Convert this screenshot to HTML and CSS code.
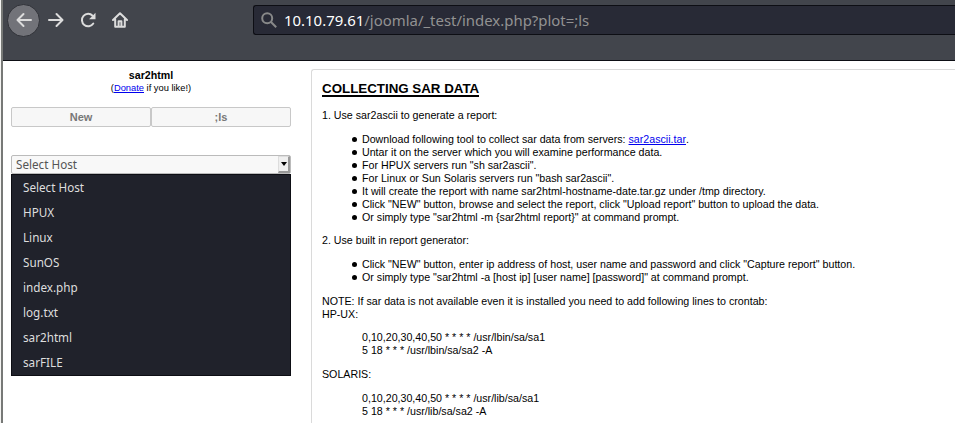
FILE: index.html
```html
<!DOCTYPE html>
<html lang="en">
<head>
<meta charset="utf-8">
<title>sar2html</title>
<link rel="stylesheet" href="styles.css">
</head>
<body>
<div class="window">
  <header class="toolbar">
    <nav class="nav">
      <span class="nav-item back"><svg viewBox="0 0 16 16"><path d="M15 8H2M7.5 2 1.5 8l6 6"/></svg></span>
      <span class="nav-item"><svg viewBox="0 0 16 16"><path d="M1 8h13M8.500 2l6 6-6 6"/></svg></span>
      <span class="nav-item"><svg viewBox="0 0 16 16"><path d="M13.300 11.500A6.200 6.200 0 1 1 12.600 3.700"/><path class="solid" d="M15.500.8v6.400H9.100z"/></svg></span>
      <span class="nav-item"><svg viewBox="0 0 16 16"><path d="M1 8 8 1.300 15 8M3.200 7.500V14.800h9.600V7.500M6.600 14.500V9.200h2.800v5.300"/></svg></span>
    </nav>
    <div class="urlbar">
      <svg class="search" viewBox="0 0 16 16"><circle cx="6.200" cy="6.200" r="5"/><path d="m10 10 5.200 5.200"/></svg>
      <span class="url"><b>10.10.79.61</b>/joomla/_test/index.php?plot=;ls</span>
    </div>
  </header>
  <main class="page">
    <aside class="sidebar">
      <div class="brand">sar2html</div>
      <div class="donate">(<a href="#">Donate</a> if you like!)</div>
      <div class="buttons"><button>New</button><button>;ls</button></div>
      <div class="select"><span>Select Host</span><i class="drop"></i></div>
      <ul class="options">
        <li>Select Host</li><li>HPUX</li><li>Linux</li><li>SunOS</li>
        <li>index.php</li><li>log.txt</li><li>sar2html</li><li>sarFILE</li>
      </ul>
    </aside>
    <section class="content">
      <h1><span>COLLECTING SAR DATA</span></h1>
      <p>1. Use sar2ascii to generate a report:</p>
      <ul>
        <li>Download following tool to collect sar data from servers: <a href="#">sar2ascii.tar</a>.</li>
        <li>Untar it on the server which you will examine performance data.</li>
        <li>For HPUX servers run "sh sar2ascii".</li>
        <li>For Linux or Sun Solaris servers run "bash sar2ascii".</li>
        <li>It will create the report with name sar2html-hostname-date.tar.gz under /tmp directory.</li>
        <li>Click "NEW" button, browse and select the report, click "Upload report" button to upload the data.</li>
        <li>Or simply type "sar2html -m {sar2html report}" at command prompt.</li>
      </ul>
      <p>2. Use built in report generator:</p>
      <ul>
        <li>Click "NEW" button, enter ip address of host, user name and password and click "Capture report" button.</li>
        <li>Or simply type "sar2html -a [host ip] [user name] [password]" at command prompt.</li>
      </ul>
      <p>NOTE: If sar data is not available even it is installed you need to add following lines to crontab:<br>HP-UX:</p>
      <p class="cron">0,10,20,30,40,50 * * * * /usr/lbin/sa/sa1<br>5 18 * * * /usr/lbin/sa/sa2 -A</p>
      <p>SOLARIS:</p>
      <p class="cron">0,10,20,30,40,50 * * * * /usr/lib/sa/sa1<br>5 18 * * * /usr/lib/sa/sa2 -A</p>
    </section>
  </main>
</div>
</body>
</html>
```
FILE: styles.css
```css
* { box-sizing: border-box; }
html, body { height: 100%; margin: 0; overflow: hidden; }
body { background: #f4f4f2; color: #000; font-family: "Liberation Sans", Arial, sans-serif; font-size: 10.667px; line-height: 13px; }
a { color: #0000ee; }
.window { height: 423px; margin-left: 1px; border-left: 2px solid #777977; overflow: hidden; }
.toolbar { display: flex; align-items: flex-start; height: 61px; padding: 3px 0 0 4px; background: #42454c; border-bottom: 1px solid #0d0e14; }
.nav { display: flex; align-items: center; width: 246px; height: 34px; }
.nav-item { display: flex; align-items: center; justify-content: center; width: 32px; height: 32px; }
.nav-item svg { width: 16px; height: 16px; fill: none; stroke: #dcdcdc; stroke-width: 2; stroke-linecap: round; stroke-linejoin: round; }
.nav-item .solid { fill: #dcdcdc; stroke: none; }
.back { width: 33px; height: 33px; border: 1px solid #303238; border-radius: 50%; background: #727379; }
.urlbar { display: flex; align-items: center; flex: 1; height: 30px; margin-top: 2px; padding-left: 7px; background: #282a36; border: 1px solid #0d0e14; border-right: 0; border-radius: 3px 0 0 3px; }
.search { width: 16px; height: 16px; fill: none; stroke: #888989; stroke-width: 2; }
.url { margin-left: 7px; color: #929292; font: 14.93px/22px "Noto Sans", sans-serif; white-space: nowrap; }
.url b { color: #fff; font-weight: 400; }
.page { display: flex; height: 362px; background: #fff; }
.sidebar { width: 280px; margin-left: 8px; padding-top: 8px; flex: none; }
.brand { font-size: 10.667px; font-weight: 700; line-height: 13px; text-align: center; }
.donate { font-size: 9.333px; line-height: 12px; text-align: center; }
.buttons { display: flex; margin-top: 13px; }
.buttons button { flex: 1; height: 20px; padding: 0; border: 1px solid #c8c8c8; border-radius: 2px; background: #f7f7f7; color: #777; font: 700 11px/18px "Liberation Sans", sans-serif; }
.select { display: flex; justify-content: space-between; height: 19px; margin-top: 28px; padding-left: 4px; border: 1px solid #bbb; border-radius: 2px; background: #f8f8f8; color: #555; font: 11.7px/17px "Noto Sans", sans-serif; }
.drop { display: flex; align-items: center; justify-content: center; width: 12px; height: 17px; border: 1px solid #ddd; border-right: 2px solid #999; border-bottom: 2px solid #999; background: #efefef; }
.drop::after { content: ""; border: 3px solid transparent; border-top: 4px solid #000; border-bottom: 0; }
.options { height: 202px; margin: 0; padding: 0 0 0 11px; border: 1px solid #0d0e14; background: #20222b; color: #dedede; list-style: none; font: 11.7px/25px "Noto Sans", sans-serif; }
.content { flex: 1; height: 400px; margin: 8px 0 0 20px; padding: 11px 0 0 10px; border: 1px solid #dadada; border-right: 0; border-radius: 3px 0 0 0; white-space: nowrap; }
h1 { height: 16px; margin: 0 0 12px; font-size: 13.333px; line-height: 15px; }
h1 span { display: inline-block; height: 16px; border-bottom: 2px solid #000; }
.content p { margin: 0 0 10.667px; }
.content ul { margin: 0 0 10.667px; padding-left: 40px; list-style: none; }
.content li { display: flex; align-items: center; height: 13px; white-space: pre; }
.content li::before { content: ""; width: 5px; height: 5px; margin: 1px 5px 0 -10px; border-radius: 50%; background: #000; }
.content .cron { margin-left: 40px; }
```
